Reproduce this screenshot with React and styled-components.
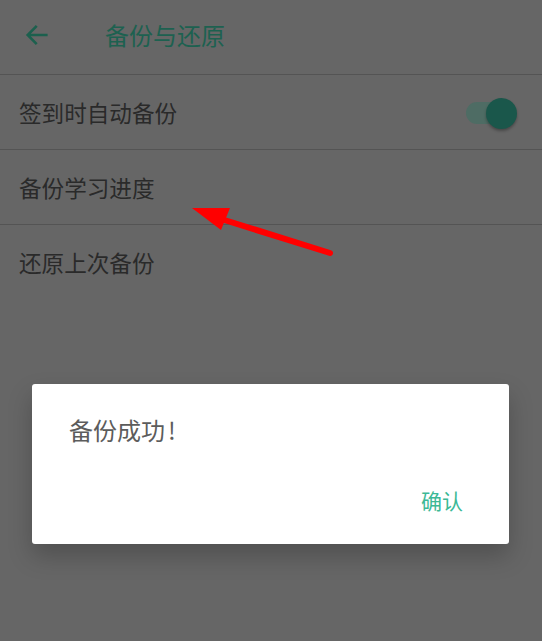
import styled, { createGlobalStyle } from "styled-components";

const GlobalStyle = createGlobalStyle`
  html, body {
    margin: 0;
    padding: 0;
    background: #666;
  }
  body {
    font-family: "Noto Sans CJK SC", "Noto Sans", sans-serif;
  }
`;

const Page = styled.div`
  position: relative;
  width: 542px;
  height: 641px;
  overflow: hidden;
  background: #666;
`;

const Header = styled.div`
  display: flex;
  align-items: center;
  height: 75px;
  padding: 0 0 5px 22px;
  border-bottom: 1px solid #545454;
  box-sizing: border-box;
`;

const BackBtn = styled.button`
  display: flex;
  align-items: center;
  justify-content: center;
  width: 30px;
  height: 30px;
  padding: 0;
  border: none;
  background: none;
  color: #1c604e;
`;

const Title = styled.h1`
  margin: 0 0 0 53px;
  font-size: 24px;
  font-weight: normal;
  color: #1d6150;
`;

const Row = styled.div`
  display: flex;
  align-items: center;
  justify-content: space-between;
  height: 75px;
  padding: 0 25px 0 19px;
  box-sizing: border-box;
  font-size: 22.6px;
  color: #2a2a2a;
  border-bottom: ${(p) => (p.last ? "none" : "1px solid #545454")};
`;

const Switch = styled.div`
  position: relative;
  width: 51px;
  height: 31px;
  margin-top: 2px;
`;

const Track = styled.div`
  position: absolute;
  left: 0;
  top: 4px;
  width: 46px;
  height: 22px;
  border-radius: 11px;
  background: #4e6c64;
`;

const Thumb = styled.div`
  position: absolute;
  right: 0;
  top: 0;
  width: 31px;
  height: 31px;
  border-radius: 50%;
  background: #1a574b;
  box-shadow: 0 2px 3px rgba(0, 0, 0, 0.3);
`;

const Dialog = styled.div`
  position: absolute;
  left: 32px;
  top: 384px;
  width: 477px;
  height: 160px;
  display: flex;
  flex-direction: column;
  box-sizing: border-box;
  padding: 28px 46px 29px 37px;
  background: #fff;
  border-radius: 3px;
  box-shadow: 0 12px 24px rgba(0, 0, 0, 0.22);
`;

const Message = styled.div`
  font-size: 24px;
  color: #5c5c5c;

  span {
    margin-left: 3px;
  }
`;

const Actions = styled.div`
  display: flex;
  justify-content: flex-end;
  margin-top: auto;
`;

const ConfirmBtn = styled.button`
  padding: 0;
  border: none;
  background: none;
  font-family: inherit;
  font-size: 21px;
  color: #3cb996;
`;

const Annotation = styled.svg`
  position: absolute;
  left: 0;
  top: 0;
  pointer-events: none;
`;

export default function App() {
  return (
    <Page>
      <GlobalStyle />
      <Header>
        <BackBtn>
          <svg width="28" height="28" viewBox="0 0 24 24" fill="none">
            <path
              d="M20 12H4.5M11 5l-7 7 7 7"
              stroke="currentColor"
              strokeWidth="2.2"
              strokeLinecap="square"
            />
          </svg>
        </BackBtn>
        <Title>备份与还原</Title>
      </Header>
      <Row>
        签到时自动备份
        <Switch>
          <Track />
          <Thumb />
        </Switch>
      </Row>
      <Row>备份学习进度</Row>
      <Row last>还原上次备份</Row>

      <Annotation width="542" height="641" viewBox="0 0 542 641">
        <line
          x1="330"
          y1="253"
          x2="218"
          y2="218"
          stroke="#ff0000"
          strokeWidth="6"
          strokeLinecap="round"
        />
        <polygon points="192,208 230,208 221,230" fill="#ff0000" />
      </Annotation>

      <Dialog>
        <Message>
          备份成功<span>!</span>
        </Message>
        <Actions>
          <ConfirmBtn>确认</ConfirmBtn>
        </Actions>
      </Dialog>
    </Page>
  );
}
